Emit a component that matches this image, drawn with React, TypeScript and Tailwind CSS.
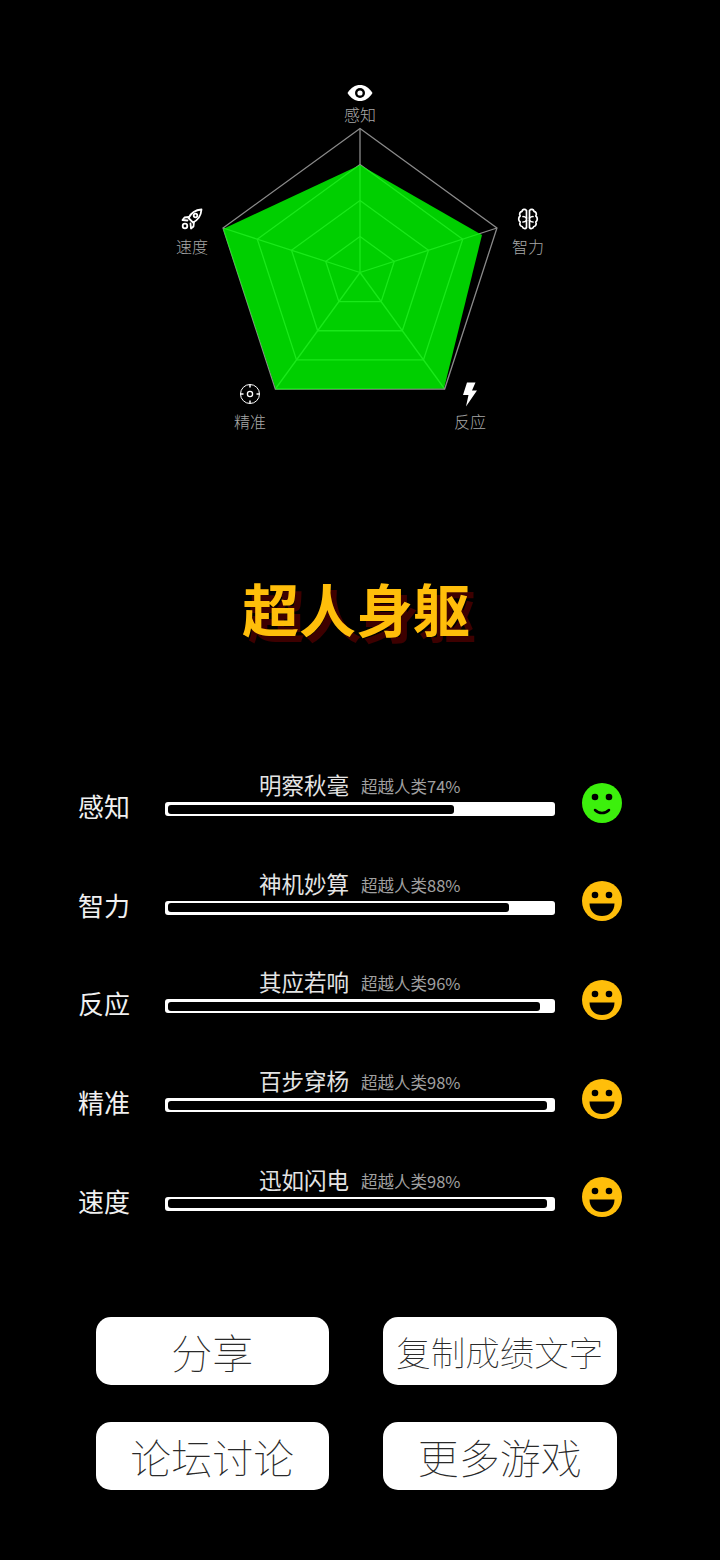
const cx = 360;
const cy = 272.5;
const R = 144;

function point(i: number, r: number) {
    const a = (-90 + i * 72) * (Math.PI / 180);
    return `${cx + r * Math.cos(a)},${cy + r * Math.sin(a)}`;
}

function ring(r: number) {
    return [0, 1, 2, 3, 4].map((i) => point(i, r)).join(" ");
}

function EyeIcon() {
    return (
        <svg width="26" height="18" viewBox="0 0 26 18">
            <path d="M0.5 9C4 3.6 8.2 1 13 1s9 2.6 12.5 8c-3.500 5.400-7.700 8-12.500 8S4 14.400 0.500 9z" fill="#fff" />
            <circle cx="13" cy="9" r="5" fill="#000" />
            <circle cx="13" cy="9" r="2.600" fill="#fff" />
        </svg>
    );
}

function BrainIcon() {
    return (
        <svg width="24" height="24" viewBox="0 0 24 24" fill="none" stroke="#fff" strokeWidth="1.700" strokeLinejoin="round" strokeLinecap="round">
            <path d="M10.500 3.500C8.800 1.500 6.500 2.300 6 4.300 3.800 4.800 3 7.200 4.200 9 2.200 10.500 2.200 13.500 4.200 15 3.200 17.500 4.500 19.500 6.200 19.500 7 21.800 9.500 22.300 10.500 20.500z" />
            <path d="M13.500 3.500C15.200 1.500 17.500 2.300 18 4.300 20.200 4.800 21 7.200 19.800 9 21.800 10.500 21.800 13.500 19.800 15 20.800 17.500 19.500 19.500 17.800 19.500 17 21.800 14.500 22.300 13.500 20.500z" />
            <path d="M7 9.500c1.500 0 2.500.5 3.500 1.500M17 9.500c-1.500 0-2.500.5-3.500 1.500M7 15c1.500 0 2.500-.5 3.500-1.500M17 15c-1.500 0-2.500-.5-3.500-1.500" />
        </svg>
    );
}

function TargetIcon() {
    return (
        <svg width="22" height="22" viewBox="0 0 22 22" fill="none" stroke="#fff">
            <circle cx="11" cy="11" r="9.500" strokeWidth="1" />
            <circle cx="11" cy="11" r="2.600" strokeWidth="1.300" />
            <path d="M11 1.500v3M11 17.500v3M1.500 11h3M17.500 11h3" strokeWidth="1.500" />
        </svg>
    );
}

function BoltIcon() {
    return (
        <svg width="16" height="25" viewBox="0 0 16 25">
            <path d="M5 0.500h8.500L10 8.500h5L4 24.500l2.500-11.500H1z" fill="#fff" />
        </svg>
    );
}

function RocketIcon() {
    return (
        <svg width="24" height="24" viewBox="0 0 24 24" fill="none" stroke="#fff" strokeWidth="1.800" strokeLinejoin="round" strokeLinecap="round">
            <path d="M21.500 2.500C15.500 3 11 6 8.500 11L13 15.500C18 13 21 8.500 21.500 2.500z" />
            <circle cx="15.500" cy="8.500" r="1.800" />
            <path d="M9 10L4.500 10.500 2.500 13 7.500 13.500M14 15L13.500 19.500 11 21.500 10.500 16.500" />
            <circle cx="5" cy="19" r="2.300" />
        </svg>
    );
}

function Smiley({ happy }: { happy: boolean }) {
    return (
        <svg width="40" height="40" viewBox="0 0 40 40" className="shrink-0">
            <circle cx="20" cy="20" r="20" fill={happy ? "#ffbe0a" : "#3cf00c"} />
            <circle cx="13" cy="14" r="3.300" fill="#000" />
            <circle cx="27" cy="14" r="3.300" fill="#000" />
            {happy ? (
                <path d="M7.500 22.500h25c0 8-5.500 12.500-12.500 12.500S7.500 30.500 7.500 22.500z" fill="#000" />
            ) : (
                <path d="M13 27c2 2 4.500 3 7 3s5-1 7-3" fill="none" stroke="#000" strokeWidth="2.500" strokeLinecap="round" />
            )}
        </svg>
    );
}

const rows = [
    { label: "感知", title: "明察秋毫", value: 74, happy: false },
    { label: "智力", title: "神机妙算", value: 88, happy: true },
    { label: "反应", title: "其应若响", value: 96, happy: true },
    { label: "精准", title: "百步穿杨", value: 98, happy: true },
    { label: "速度", title: "迅如闪电", value: 98, happy: true },
];

function AxisLabel({ text, className, textClass, children }: { text: string; className: string; textClass: string; children: React.ReactNode }) {
    return (
        <div className={`absolute flex flex-col items-center -translate-x-1/2 ${className}`}>
            <div className="flex h-[24px] items-center justify-center">{children}</div>
            <span className={`text-[16px] leading-[22px] font-light text-[#a8a8a8] ${textClass}`}>{text}</span>
        </div>
    );
}

function Radar() {
    return (
        <div className="relative h-[450px] w-full">
            <svg width="720" height="450" className="block">
                {[36, 72, 108, 144].map((r) => (
                    <polygon key={r} points={ring(r)} fill="none" stroke="#8a8a8a" strokeWidth="1.300" />
                ))}
                {[0, 1, 2, 3, 4].map((i) => (
                    <line key={i} x1={cx} y1={cy} x2={point(i, R).split(",")[0]} y2={point(i, R).split(",")[1]} stroke="#8a8a8a" strokeWidth="1.300" />
                ))}
                <polygon points="360,165 482,235 444,388.500 276,389.500 223,229" fill="#00ff00" fillOpacity="0.81" />
            </svg>
            <AxisLabel text="感知" className="left-[360px] top-[81px]" textClass="-mt-[2px]"><EyeIcon /></AxisLabel>
            <AxisLabel text="智力" className="left-[528px] top-[207px]" textClass="mt-[4px]"><BrainIcon /></AxisLabel>
            <AxisLabel text="反应" className="left-[470px] top-[382px]" textClass="mt-[4px]"><BoltIcon /></AxisLabel>
            <AxisLabel text="精准" className="left-[250px] top-[382px]" textClass="mt-[4px]"><TargetIcon /></AxisLabel>
            <AxisLabel text="速度" className="left-[192px] top-[207px]" textClass="mt-[4px]"><RocketIcon /></AxisLabel>
        </div>
    );
}

function ScoreRow({ label, title, value, happy }: { label: string; title: string; value: number; happy: boolean }) {
    return (
        <div className="flex h-[98.700px] items-start pl-[78px]">
            <div className="w-[87px] pt-[14px] text-[26px] leading-[36px] text-[#f0f0f0]">{label}</div>
            <div className="w-[390px]">
                <div className="flex h-[28px] items-end pl-[94px]">
                    <span className="mb-[3px] text-[22.500px] leading-[29px] text-[#e4e4e4]">{title}</span>
                    <span className="mb-[3px] ml-[12px] text-[16.500px] leading-[26px] text-[#a0a0a0]">超越人类{value}%</span>
                </div>
                <div className="h-[14px] rounded-[3px] bg-white pl-[3px] pt-[2.500px]">
                    <div className="h-[9px] rounded-[3px] bg-black" style={{ width: `${value}%` }} />
                </div>
            </div>
            <div className="ml-[27px] pt-[8.500px]">
                <Smiley happy={happy} />
            </div>
        </div>
    );
}

function ActionButton({ text, size }: { text: string; size: string }) {
    return (
        <button className={`flex h-[68px] w-[233.500px] items-center justify-center rounded-[15px] bg-white font-thin text-[#2a2a2a] ${size}`}>
            {text}
        </button>
    );
}

export default function App() {
    return (
        <div className="h-[1560px] w-[720px] overflow-hidden bg-black font-['Noto_Sans_CJK_SC','Noto_Sans',sans-serif]">
            <Radar />
            <h1 className="mt-[119px] pr-[8px] text-center text-[57px] leading-[76px] font-bold text-[#ffbe0a] [text-shadow:6px_6px_0_#3d0000]">
                超人身躯
            </h1>
            <div className="mt-[129px]">
                {rows.map((r) => (
                    <ScoreRow key={r.label} {...r} />
                ))}
            </div>
            <div className="mt-[50px] grid grid-cols-[233.500px_233.500px] gap-x-[54px] gap-y-[37px] pl-[95.500px]">
                <ActionButton text="分享" size="text-[41px]" />
                <ActionButton text="复制成绩文字" size="text-[34.500px]" />
                <ActionButton text="论坛讨论" size="text-[41px]" />
                <ActionButton text="更多游戏" size="text-[41px]" />
            </div>
        </div>
    );
}
